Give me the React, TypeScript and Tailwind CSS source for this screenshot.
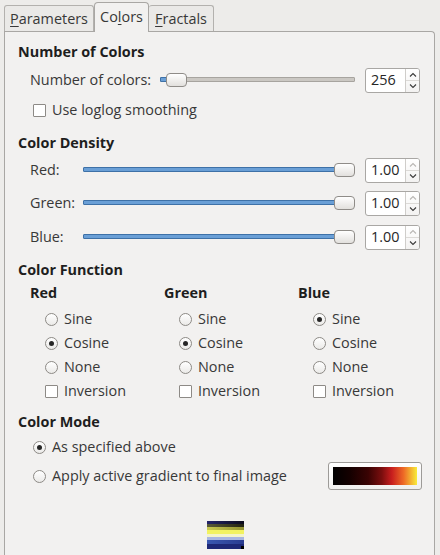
import React from "react";

function Chevron({ dir, disabled }: { dir: "up" | "down"; disabled?: boolean }) {
  return (
    <svg width="8" height="5" viewBox="0 0 8 5">
      <polyline
        points={dir === "up" ? "1,4.5 4,1.5 7,4.5" : "1,0.5 4,3.5 7,0.5"}
        fill="none"
        stroke={disabled ? "#b9b7b4" : "#3a3a3a"}
        strokeWidth="1.1"
      />
    </svg>
  );
}

function Spin({ value, upDisabled }: { value: string; upDisabled?: boolean }) {
  return (
    <div className="flex h-[25px] w-[55px] overflow-hidden rounded-[3px] border border-[#a9a7a4] bg-white">
      <div className="flex flex-1 items-center pl-[5px] text-[#262626]">{value}</div>
      <div className="flex w-[14px] flex-col border-l border-[#cfcdca] bg-gradient-to-b from-white to-[#f3f2f1]">
        <div className="flex flex-1 items-center justify-center border-b border-[#dcdad7]">
          <Chevron dir="up" disabled={upDisabled} />
        </div>
        <div className="flex flex-1 items-center justify-center">
          <Chevron dir="down" />
        </div>
      </div>
    </div>
  );
}

function Handle({ className }: { className: string }) {
  return (
    <div
      className={
        "absolute top-0 h-[14px] w-[21px] rounded-[4px] border border-[#8f8c88] bg-gradient-to-b from-white to-[#e2e0dd] " +
        className
      }
    />
  );
}

function SliderCount() {
  return (
    <div className="relative h-[14px] w-[195px]">
      <div className="absolute left-0 right-0 top-[4px] h-[5px] rounded-[1px] border border-[#a7a49f] bg-[#cbc8c3]" />
      <div className="absolute left-0 top-[4px] h-[5px] w-[9px] rounded-[1px] border border-[#3e71a7] bg-[#6a9fd6]" />
      <Handle className="left-[6px]" />
    </div>
  );
}

function SliderFull() {
  return (
    <div className="relative h-[14px] w-[272px]">
      <div className="absolute left-0 right-0 top-[4px] h-[5px] rounded-[1px] border border-[#3e71a7] bg-[#6a9fd6]" />
      <Handle className="right-0" />
    </div>
  );
}

function Radio({ checked }: { checked?: boolean }) {
  return (
    <div className="flex h-[13px] w-[13px] shrink-0 items-center justify-center rounded-full border border-[#8d8a86] bg-gradient-to-b from-white to-[#ebeae8]">
      {checked && <div className="h-[5px] w-[5px] rounded-full bg-[#262626]" />}
    </div>
  );
}

function Check() {
  return <div className="h-[13px] w-[13px] shrink-0 rounded-[1px] border border-[#8d8a86] bg-white" />;
}

function OptRow({ icon, label }: { icon: React.ReactNode; label: string }) {
  return (
    <div className="flex h-[24px] items-center pl-[15px]">
      {icon}
      <span className="ml-[6px]">{label}</span>
    </div>
  );
}

function Column({ title, sel }: { title: string; sel: number }) {
  return (
    <div className="flex w-[134px] flex-col">
      <div className="flex h-[20px] items-center font-bold text-[#1e1e1e]">{title}</div>
      <div className="mt-[4px] flex flex-col">
        <OptRow icon={<Radio checked={sel === 0} />} label="Sine" />
        <OptRow icon={<Radio checked={sel === 1} />} label="Cosine" />
        <OptRow icon={<Radio checked={sel === 2} />} label="None" />
        <OptRow icon={<Check />} label="Inversion" />
      </div>
    </div>
  );
}

function DensityRow({ label, className }: { label: string; className?: string }) {
  return (
    <div className={"ml-[12px] flex h-[26px] items-center " + (className ?? "")}>
      <span className="w-[53px]">{label}</span>
      <SliderFull />
      <div className="ml-[10px]">
        <Spin value="1.00" upDisabled />
      </div>
    </div>
  );
}

function Preview() {
  return (
    <svg width="37" height="28" viewBox="0 0 37 28" shapeRendering="crispEdges">
      <defs>
        <linearGradient id="g1" x1="0" x2="1">
          <stop offset="0" stopColor="#24246a" />
          <stop offset="1" stopColor="#0a0a1a" />
        </linearGradient>
        <linearGradient id="g2" x1="0" x2="1">
          <stop offset="0" stopColor="#5a5a3a" />
          <stop offset="1" stopColor="#202010" />
        </linearGradient>
        <linearGradient id="g3" x1="0" x2="1">
          <stop offset="0" stopColor="#c8c850" />
          <stop offset="1" stopColor="#909030" />
        </linearGradient>
        <linearGradient id="g7" x1="0" x2="1">
          <stop offset="0" stopColor="#3a58b0" />
          <stop offset="1" stopColor="#2a3c90" />
        </linearGradient>
      </defs>
      <rect x="0" y="0" width="37" height="3" fill="url(#g1)" />
      <rect x="0" y="3" width="37" height="3" fill="url(#g2)" />
      <rect x="0" y="6" width="37" height="3" fill="url(#g3)" />
      <rect x="0" y="9" width="37" height="4" fill="#f2f260" />
      <rect x="0" y="13" width="37" height="3" fill="#f4f4c8" />
      <rect x="0" y="16" width="37" height="3" fill="#a8b6e2" />
      <rect x="0" y="19" width="37" height="4" fill="url(#g7)" />
      <rect x="0" y="23" width="37" height="5" fill="#1e2876" />
      <rect x="34" y="25" width="3" height="3" fill="#000000" />
    </svg>
  );
}

export default function App() {
  return (
    <div className="h-[555px] w-[440px] overflow-hidden bg-[#edecea] font-['Open_Sans',_'Noto_Sans',_sans-serif] text-[14.4px] text-[#383838]">
      {/* Tabs */}
      <div className="flex h-[31px] items-end pl-[4px]">
        <div className="flex h-[26px] w-[90px] items-center justify-center rounded-t-[3px] border border-b-0 border-[#b3b1ae] bg-[#eae9e7]">
          <span>
            <span className="underline underline-offset-2">P</span>arameters
          </span>
        </div>
        <div className="relative z-10 -mb-px flex h-[30px] w-[55px] items-center justify-center rounded-t-[4px] border border-b-0 border-[#a9a7a4] bg-[#f2f1f0] pb-[2px]">
          <span>
            Co<span className="underline underline-offset-2">l</span>ors
          </span>
        </div>
        <div className="flex h-[26px] w-[65px] items-center justify-center rounded-t-[3px] border border-b-0 border-l-0 border-[#b3b1ae] bg-[#eae9e7]">
          <span>
            <span className="underline underline-offset-2">F</span>ractals
          </span>
        </div>
      </div>

      {/* Panel */}
      <div className="ml-[4px] flex h-[524px] w-[431px] flex-col rounded-tr-[4px] border border-b-0 border-[#a9a7a4] bg-[#f2f1f0] pl-[13px] pt-[10px]">
        <div className="flex h-[20px] items-center font-bold text-[#1e1e1e]">Number of Colors</div>
        <div className="ml-[12px] mt-[5px] flex h-[26px] items-center">
          <span className="w-[130px]">Number of colors:</span>
          <SliderCount />
          <div className="ml-[10px]">
            <Spin value="256" />
          </div>
        </div>
        <div className="ml-[15px] mt-[7px] flex h-[20px] items-center">
          <Check />
          <span className="ml-[6px]">Use loglog smoothing</span>
        </div>

        <div className="mt-[13px] flex h-[20px] items-center font-bold text-[#1e1e1e]">Color Density</div>
        <DensityRow label="Red:" className="mt-[4px]" />
        <DensityRow label="Green:" className="mt-[7px]" />
        <DensityRow label="Blue:" className="mt-[8px]" />

        <div className="mt-[10px] flex h-[20px] items-center font-bold text-[#1e1e1e]">Color Function</div>
        <div className="ml-[12px] mt-[3px] flex">
          <Column title="Red" sel={1} />
          <Column title="Green" sel={1} />
          <Column title="Blue" sel={0} />
        </div>

        <div className="mt-[9px] flex h-[20px] items-center font-bold text-[#1e1e1e]">Color Mode</div>
        <div className="ml-[15px] mt-[3px] flex h-[24px] items-center">
          <Radio checked />
          <span className="ml-[6px]">As specified above</span>
        </div>
        <div className="ml-[15px] mt-[2px] flex h-[30px] items-center">
          <Radio />
          <span className="ml-[6px]">Apply active gradient to final image</span>
          <div className="ml-auto mr-[12px] flex h-[28px] w-[94px] items-center rounded-[3px] border border-[#9d9b98] bg-gradient-to-b from-white to-[#f0efee] px-[4px]">
            <div className="h-[18px] w-full bg-[linear-gradient(to_right,#000000_0%,#140000_20%,#3a0303_42%,#7a0e0e_58%,#c81e1e_70%,#ee6a26_84%,#f8ec3a_100%)]" />
          </div>
        </div>

        <div className="ml-[189px] mt-[30px]">
          <Preview />
        </div>
      </div>
    </div>
  );
}
